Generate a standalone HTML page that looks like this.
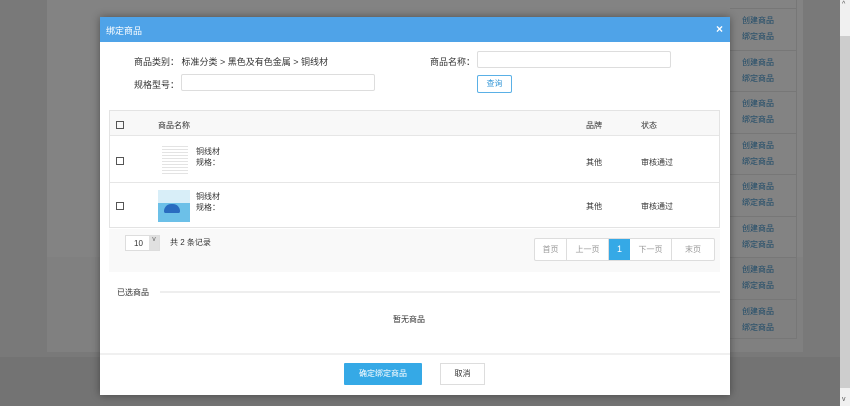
<!DOCTYPE html>
<html><head><meta charset="utf-8"><style>
*{box-sizing:border-box;margin:0;padding:0}
body{width:850px;height:406px;overflow:hidden;position:relative;background:#737373;font-family:"Liberation Sans","Noto Sans CJK SC",sans-serif;font-size:9px;color:#333}
.abs{position:absolute}
</style></head><body>
<div class="abs" style="left:0;top:0;width:840px;height:357px;background:#797979"></div>
<div class="abs" style="left:47px;top:0;width:756px;height:352px;background:#808080"></div>
<div class="abs" style="left:47px;top:0;width:756px;height:257px;background:#838383"></div>
<div class="abs" style="left:730px;top:0;width:67px;height:339px;border-right:1px solid #777;border-bottom:1px solid #777"></div>
<div id="rt"></div>
<div class="abs" style="left:840px;top:0;width:10px;height:406px;background:#cdcdcd"></div>
<div class="abs" style="left:840px;top:0;width:10px;height:36px;background:#f0f0f0"></div>
<div class="abs" style="left:840px;top:388px;width:10px;height:18px;background:#f0f0f0"></div>
<div class="abs" style="left:842px;top:1px;font-size:7px;color:#555">^</div>
<div class="abs" style="left:842px;top:396px;font-size:7px;color:#555">v</div>
<div class="abs" style="left:100px;top:17px;width:630px;height:378px;background:#fff;box-shadow:0 0 8px rgba(0,0,0,.4)">
 <div class="abs" style="left:0;top:0;width:630px;height:25px;background:#4fa3e8;color:#fff;font-size:9px;padding:7px 6px">绑定商品</div>
 <div class="abs" style="right:7px;top:5px;color:#fff;font-size:12px;font-weight:bold">×</div>
 <div class="abs" style="left:34px;top:38px">商品类别： 标准分类 &gt; 黑色及有色金属 &gt; 铜线材</div>
 <div class="abs" style="left:330px;top:38px">商品名称：</div>
 <div class="abs" style="left:377px;top:34px;width:194px;height:17px;border:1px solid #ddd;border-radius:2px"></div>
 <div class="abs" style="left:34px;top:61px">规格型号：</div>
 <div class="abs" style="left:81px;top:57px;width:194px;height:17px;border:1px solid #ddd;border-radius:2px"></div>
 <div class="abs" style="left:377px;top:58px;width:35px;height:18px;border:1px solid #5ab0e6;border-radius:2px;color:#3a9ad8;font-size:8px;text-align:center;line-height:16px">查询</div>
 <div class="abs" style="left:9px;top:93px;width:611px;height:118px;border:1px solid #e3e3e3"></div>
 <div class="abs" style="left:10px;top:94px;width:609px;height:25px;background:#f8f8f8;border-bottom:1px solid #e6e6e6"></div>
 <div class="abs" style="left:10px;top:165px;width:609px;height:1px;background:#e6e6e6"></div>
 <div class="abs" style="left:16px;top:104px;width:8px;height:8px;border:1px solid #555"></div>
 <div class="abs" style="left:16px;top:140px;width:8px;height:8px;border:1px solid #555"></div>
 <div class="abs" style="left:16px;top:185px;width:8px;height:8px;border:1px solid #555"></div>
 <div class="abs" style="left:58px;top:103px;font-size:8px">商品名称</div>
 <div class="abs" style="left:486px;top:103px;font-size:8px">品牌</div>
 <div class="abs" style="left:541px;top:103px;font-size:8px">状态</div>
 <div class="abs" style="left:62px;top:127px;width:26px;height:32px;background:repeating-linear-gradient(#fff 0 2px,#e3e3e3 2px 3px)"></div>
 <div class="abs" style="left:58px;top:173px;width:32px;height:32px;background:linear-gradient(#d8eef8 0 40%,#6cc0e8 40%)"><div style="margin:14px 0 0 6px;width:16px;height:9px;background:#2a6cc0;border-radius:8px 8px 2px 2px"></div></div>
 <div class="abs" style="left:96px;top:129px;line-height:11px;font-size:8px">铜线材<br>规格：</div>
 <div class="abs" style="left:96px;top:174px;line-height:11px;font-size:8px">铜线材<br>规格：</div>
 <div class="abs" style="left:486px;top:140px;font-size:8px">其他</div>
 <div class="abs" style="left:541px;top:140px;font-size:8px">审核通过</div>
 <div class="abs" style="left:486px;top:184px;font-size:8px">其他</div>
 <div class="abs" style="left:541px;top:184px;font-size:8px">审核通过</div>
 <div class="abs" style="left:9px;top:212px;width:611px;height:43px;background:#f9f9f9"></div>
 <div class="abs" style="left:25px;top:218px;width:35px;height:16px;border:1px solid #ddd;background:#fff;font-size:8px;padding:3px 0 0 8px">10</div>
 <div class="abs" style="left:49px;top:219px;width:10px;height:14px;background:#e0e0e0;font-size:7px;text-align:center;color:#666">v</div>
 <div class="abs" style="left:70px;top:220px;font-size:8px">共 2 条记录</div>
 <div class="abs" style="left:434px;top:221px;width:181px;height:23px;border:1px solid #ddd;border-radius:2px;display:flex;font-size:8px;color:#999;background:#fff">
  <div style="width:32px;text-align:center;line-height:21px;border-right:1px solid #ddd">首页</div>
  <div style="width:42px;text-align:center;line-height:21px;border-right:1px solid #ddd">上一页</div>
  <div style="width:21px;text-align:center;line-height:21px;background:#35a9e6;color:#fff;font-size:9px">1</div>
  <div style="width:42px;text-align:center;line-height:21px;border-right:1px solid #ddd">下一页</div>
  <div style="flex:1;text-align:center;line-height:21px">末页</div>
 </div>
 <div class="abs" style="left:17px;top:270px;font-size:8px">已选商品</div>
 <div class="abs" style="left:60px;top:274px;width:560px;height:2px;background:#eee"></div>
 <div class="abs" style="left:293px;top:297px;font-size:8px">暂无商品</div>
 <div class="abs" style="left:0;top:336px;width:630px;height:2px;background:#f0f0f0"></div>
 <div class="abs" style="left:244px;top:346px;width:78px;height:22px;background:#35a9e6;color:#fff;font-size:8px;text-align:center;line-height:22px;border-radius:1px">确定绑定商品</div>
 <div class="abs" style="left:340px;top:346px;width:45px;height:22px;border:1px solid #ddd;font-size:8px;text-align:center;line-height:20px">取消</div>
</div>
<script>
var h='';for(var i=0;i<8;i++){var y=8+i*41.5;h+='<div class="abs" style="left:730px;top:'+y+'px;width:67px;height:41px;border-top:1px solid #777;font-size:8px;color:#1d4a68;padding:4px 0 0 12px;line-height:16px">创建商品<br>绑定商品</div>';}
document.getElementById('rt').innerHTML=h;
</script>
</body></html>
